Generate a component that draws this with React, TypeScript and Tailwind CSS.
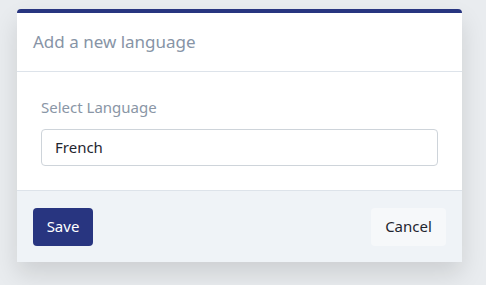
export default function App() {
  return (
    <div className="w-[486px] h-[285px] bg-[#e9ecef] pt-[9px] pl-[17px] font-['Noto_Sans',sans-serif] overflow-hidden">
      <div className="w-[445px] bg-white border-t-4 border-[#283580] rounded-t-[4px] shadow-[0_12px_24px_rgba(0,0,0,0.12)]">
        {/* header */}
        <div className="h-[59px] px-4 flex items-center border-b border-[#dde3ea]">
          <span className="text-[17px] text-[#8794a6]">Add a new language</span>
        </div>

        {/* body */}
        <div className="px-6 pt-[25px] pb-[24px] border-b border-[#dde3ea]">
          <div className="text-[15px] text-[#8a96a6] leading-5 mb-[12px]">Select Language</div>
          <div className="h-[37px] border border-[#ced4da] rounded-[4px] flex items-center px-[13px] text-[15px] text-[#1f2630]">
            French
          </div>
        </div>

        {/* footer */}
        <div className="h-[71px] bg-[#eff3f7] px-4 flex items-center justify-between">
          <button className="h-[38px] w-[60px] rounded-[4px] bg-[#283580] text-white text-[15px]">Save</button>
          <button className="h-[38px] w-[75px] rounded-[4px] bg-[#f6f8fa] text-[#1f2630] text-[15px]">Cancel</button>
        </div>
      </div>
    </div>
  );
}
